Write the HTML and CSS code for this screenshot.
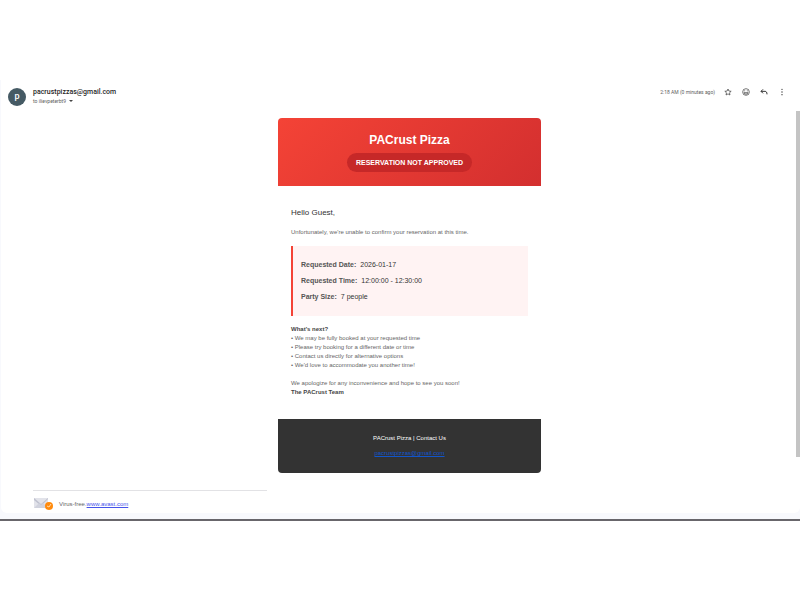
FILE: index.html
```html
<!DOCTYPE html>
<html lang="en">
<head>
    <meta charset="UTF-8">
    <meta name="viewport" content="width=device-width, initial-scale=1.0">
    <title>PACrust Pizza - Reservation Not Approved</title>
    <link rel="stylesheet" href="styles.css">
</head>
<body>
    <div class="mail-window">
        <main class="mail-panel">
            <!-- Sender and message actions -->
            <header class="mail-header">
                <div class="avatar">p</div>
                <div class="sender">
                    <div class="sender-address">pacrustpizzas@gmail.com</div>
                    <button type="button" class="recipient">to ilievpeterbt9 <span class="caret"></span></button>
                </div>
                <div class="sent-time">2:18 AM (0 minutes ago)</div>
                <div class="actions">
                    <button type="button" class="icon-btn" aria-label="Star">
                        <svg viewBox="0 0 24 24"><path d="M12 3l2.800 6.200 6.700.7-5 4.500 1.400 6.600-5.900-3.400L6.100 21l1.400-6.600-5-4.500 6.700-.7z"/></svg>
                    </button>
                    <button type="button" class="icon-btn" aria-label="Add reaction">
                        <svg viewBox="0 0 24 24"><circle cx="12" cy="12" r="10"/><path d="M6 14c1 6 11 6 12 0z"/><path d="M8 7v3M16 7v3"/></svg>
                    </button>
                    <button type="button" class="icon-btn" aria-label="Reply">
                        <svg viewBox="0 0 24 24" class="reply"><path d="M9 4L3 10l6 6M3 10h12c4 0 6 3 6 9"/></svg>
                    </button>
                    <button type="button" class="icon-btn" aria-label="More">
                        <svg viewBox="0 0 24 24" class="dots"><circle cx="12" cy="4" r="2"/><circle cx="12" cy="12" r="2"/><circle cx="12" cy="20" r="2"/></svg>
                    </button>
                </div>
            </header>

            <div class="mail-scroll">
                <div class="mail-content">
                    <article class="email">
                        <div class="email-header">
                            <h1>PACrust Pizza</h1>
                            <div class="status-badge">RESERVATION NOT APPROVED</div>
                        </div>
                        <div class="email-body">
                            <p class="greeting">Hello Guest,</p>
                            <p class="message">Unfortunately, we're unable to confirm your reservation at this time.</p>
                            <div class="details">
                                <div class="detail-row"><strong>Requested Date:</strong> <span>2026-01-17</span></div>
                                <div class="detail-row"><strong>Requested Time:</strong> <span>12:00:00 - 12:30:00</span></div>
                                <div class="detail-row"><strong>Party Size:</strong> <span>7 people</span></div>
                            </div>
                            <p class="message">
                                <strong>What's next?</strong><br>
                                • We may be fully booked at your requested time<br>
                                • Please try booking for a different date or time<br>
                                • Contact us directly for alternative options<br>
                                • We'd love to accommodate you another time!
                            </p>
                            <p class="message">
                                We apologize for any inconvenience and hope to see you soon!<br>
                                <strong>The PACrust Team</strong>
                            </p>
                        </div>
                        <footer class="email-footer">
                            <p>PACrust Pizza | Contact Us</p>
                            <p><a href="mailto:pacrustpizzas@gmail.com">pacrustpizzas@gmail.com</a></p>
                        </footer>
                    </article>

                    <!-- Antivirus signature -->
                    <div class="signature">
                        <svg class="signature-icon" viewBox="0 0 20 14">
                            <rect x="1" y="1" width="14" height="10" fill="#e2e3ea"/>
                            <path d="M1 1l7 6 7-6v1L8 9 1 3z" fill="#bfc1cf"/>
                            <path d="M1 11l5-5 2 2 2-2 5 5z" fill="#d0d2dd"/>
                            <circle cx="16" cy="9" r="4" fill="#ff8a0c"/>
                            <path d="M14 9l2 1 2-3" fill="none" stroke="#ffd9a8"/>
                        </svg>
                        <span>Virus-free.<a href="https://www.avast.com">www.avast.com</a></span>
                    </div>
                </div>
                <div class="scroll-thumb"></div>
            </div>
        </main>
    </div>
</body>
</html>
```
FILE: styles.css
```css
* {
    margin: 0;
    padding: 0;
    box-sizing: border-box;
}

body {
    font-family: "Liberation Sans", Arial, sans-serif;
    background: #fff;
    color: #666;
    padding: 80px 0;
}

button {
    background: none;
    border: none;
    font: inherit;
    color: inherit;
    cursor: pointer;
}

.mail-window {
    background: #f8f9fd;
    border-bottom: 2px solid #68666b;
    padding: 0 0 6px 1px;
}

.mail-panel {
    background: #fff;
    border-radius: 0 0 6px 6px;
}

/* Message header */
.mail-header {
    display: flex;
    align-items: center;
    height: 31px;
    padding: 2px 14px 0 7px;
    font-family: Roboto, sans-serif;
}

.avatar {
    width: 18px;
    height: 18px;
    border-radius: 50%;
    background: #455a64;
    color: #fff;
    font-size: 9px;
    font-weight: 500;
    line-height: 16px;
    text-align: center;
}

.sender {
    flex: 1;
    margin-left: 7px;
}

.sender-address {
    font-size: 7px;
    line-height: 9px;
    font-weight: 500;
    color: #1f1f1f;
}

.recipient {
    display: flex;
    align-items: center;
    gap: 3px;
    font-size: 5px;
    line-height: 9px;
    color: #5e5e5e;
}

.caret {
    border: 2px solid transparent;
    border-top-color: #444;
    border-bottom: none;
}

.sent-time {
    font-size: 5px;
    line-height: 8px;
    color: #5e5e5e;
    margin-bottom: 9px;
}

.actions {
    display: flex;
    gap: 10px;
    margin: 0 0 9px 9px;
}

.icon-btn {
    width: 8px;
    height: 8px;
}

.icon-btn svg {
    display: block;
    width: 8px;
    height: 8px;
    fill: none;
    stroke: #333;
    stroke-width: 2;
}

.icon-btn .reply {
    stroke-width: 3;
}

.icon-btn .dots {
    fill: #333;
    stroke: none;
}

.mail-scroll {
    display: flex;
    align-items: flex-start;
}

.mail-content {
    flex: 1;
    padding: 7px 10px 2px 32px;
}

.scroll-thumb {
    width: 4px;
    height: 346px;
    background: #c4c4c4;
}

/* Email card */
.email {
    max-width: 263px;
    margin: 0 auto;
    border-radius: 4px;
    overflow: hidden;
}

.email-header {
    background: linear-gradient(135deg, #f44336, #d32f2f);
    color: #fff;
    padding: 14px;
    text-align: center;
}

.email-header h1 {
    font-size: 12px;
    line-height: 16px;
}

.status-badge {
    display: inline-block;
    margin-top: 5px;
    padding: 4px 9px;
    border-radius: 10px;
    background: #c62828;
    font-size: 7px;
    line-height: 11px;
    font-weight: bold;
}

.email-body {
    padding: 20px 13px 13px;
}

.greeting {
    font-size: 8px;
    line-height: 14px;
    color: #333;
    margin-bottom: 8px;
}

.message {
    font-size: 6px;
    line-height: 9px;
    margin-bottom: 9px;
}

.message strong {
    color: #444;
}

.details {
    background: #fff3f3;
    border-left: 2px solid #f44336;
    padding: 11px 8px;
    margin-bottom: 9px;
}

.detail-row {
    display: flex;
    gap: 4px;
    font-size: 7px;
    line-height: 16px;
    color: #333;
}

.detail-row strong {
    color: #555;
}

.email-footer {
    background: #333;
    color: #fff;
    padding: 15px;
    font-size: 6px;
    line-height: 9px;
    text-align: center;
}

.email-footer p + p {
    margin-top: 6px;
}

.email-footer a {
    color: #15c;
}

.signature {
    display: flex;
    align-items: center;
    gap: 6px;
    max-width: 234px;
    margin-top: 17px;
    padding-top: 6px;
    border-top: 1px solid #e2e2e5;
    font-size: 6px;
}

.signature-icon {
    width: 20px;
    height: 14px;
}

.signature a {
    color: #4453ea;
}
```
